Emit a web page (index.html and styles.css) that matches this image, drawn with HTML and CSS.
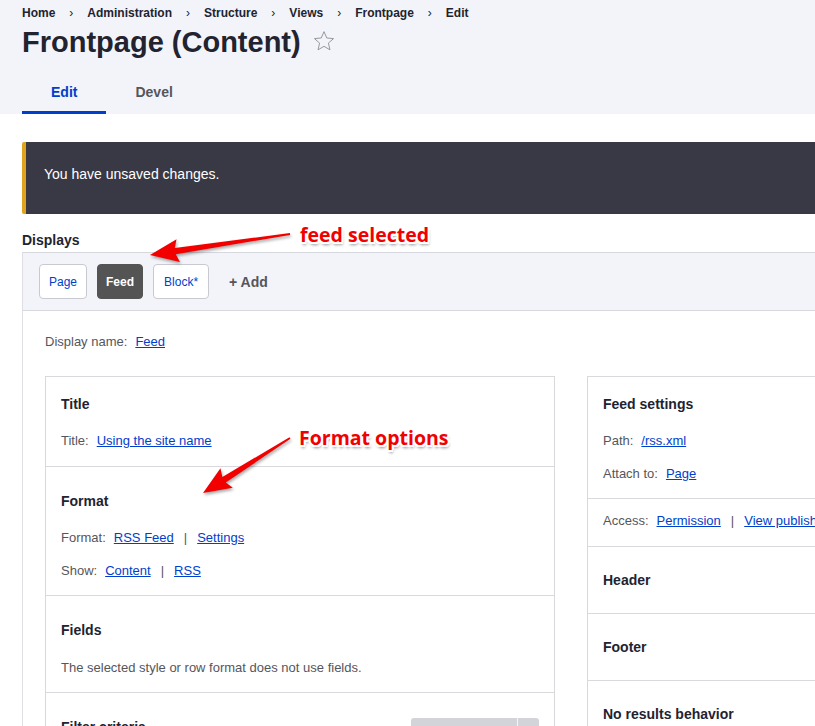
FILE: index.html
```html
<!DOCTYPE html>
<html lang="en">
<head>
<meta charset="utf-8">
<title>Frontpage (Content)</title>
<link rel="stylesheet" href="styles.css">
</head>
<body>
<div class="page">
  <header class="head">
    <nav class="crumbs">
      <a>Home</a><span class="csep">›</span><a>Administration</a><span class="csep">›</span><a>Structure</a><span class="csep">›</span><a>Views</a><span class="csep">›</span><a>Frontpage</a><span class="csep">›</span><a>Edit</a>
    </nav>
    <h1 class="title">Frontpage (Content)<svg class="star" width="22" height="22" viewBox="0 0 24 24"><path d="M12 1.8l3 6.9 7.4.7-5.6 4.9 1.7 7.3L12 17.8l-6.5 3.8 1.7-7.3-5.6-4.9 7.4-.7z" fill="none" stroke="#8e8e96" stroke-width="1" stroke-linejoin="miter"/></svg></h1>
    <div class="tabs">
      <a class="tab active">Edit</a>
      <a class="tab">Devel</a>
    </div>
  </header>

  <main class="main">
    <div class="msg">You have unsaved changes.</div>
    <div class="dlabel">Displays</div>
    <div class="displays">
      <div class="bar">
        <a class="dbtn">Page</a>
        <a class="dbtn sel">Feed</a>
        <a class="dbtn wide">Block*</a>
        <a class="addd">+ Add</a>
      </div>
      <div class="dbody">
        <div class="dname"><span class="lbl">Display name:</span><a class="lnk">Feed</a></div>
        <div class="cols">
          <div class="box">
            <section class="sec first firstl">
              <h3 class="sh">Title</h3>
              <div class="row"><span class="lbl">Title:</span><a class="lnk">Using the site name</a></div>
            </section>
            <section class="sec">
              <h3 class="sh">Format</h3>
              <div class="row"><span class="lbl">Format:</span><a class="lnk">RSS Feed</a><span class="sep">|</span><a class="lnk">Settings</a></div>
              <div class="row r2"><span class="lbl">Show:</span><a class="lnk">Content</a><span class="sep">|</span><a class="lnk">RSS</a></div>
            </section>
            <section class="sec">
              <h3 class="sh">Fields</h3>
              <div class="row plain">The selected style or row format does not use fields.</div>
            </section>
            <section class="sec filt">
              <h3 class="sh">Filter criteria</h3>
              <div class="split"><span class="smain">Add</span><span class="sdrop"></span></div>
            </section>
          </div>
          <div class="box">
            <section class="sec first">
              <h3 class="sh">Feed settings</h3>
              <div class="row"><span class="lbl">Path:</span><a class="lnk">/rss.xml</a></div>
              <div class="row r2"><span class="lbl">Attach to:</span><a class="lnk">Page</a></div>
            </section>
            <section class="sec access">
              <div class="row nomt"><span class="lbl">Access:</span><a class="lnk">Permission</a><span class="sep">|</span><a class="lnk">View published content</a></div>
            </section>
            <section class="sec honly">
              <h3 class="sh">Header</h3>
            </section>
            <section class="sec honly">
              <h3 class="sh">Footer</h3>
            </section>
            <section class="sec honly">
              <h3 class="sh">No results behavior</h3>
            </section>
          </div>
        </div>
      </div>
    </div>
  </main>

  <svg class="annot" width="815" height="726" viewBox="0 0 815 726">
    <g transform="translate(290 234) rotate(171.5)">
      <polygon class="arr" points="0,-0.9 116,-3.2 113,-11.5 141.6,0 113,11.5 116,3.2 0,0.9"/>
    </g>
    <g transform="translate(290 438) rotate(147.7)">
      <polygon class="arr" points="0,-0.9 78,-3.2 75,-11.5 102.9,0 75,11.5 78,3.2 0,0.9"/>
    </g>
  </svg>
  <div class="note n1">feed selected</div>
  <div class="note n2">Format options</div>
</div>
</body>
</html>
```

FILE: styles.css
```css
html, body {
  margin: 0;
  padding: 0;
  overflow: hidden;
  background: #fff;
}
body {
  font-family: "Liberation Sans", Arial, sans-serif;
  color: #222330;
}
.page {
  position: relative;
  width: 1200px;
  height: 726px;
  overflow: hidden;
}
a { text-decoration: none; }

/* header */
.head {
  background: #f3f4f9;
  padding: 4px 0 0 22px;
}
.crumbs {
  font-size: 12px;
  font-weight: 700;
  line-height: 18px;
  height: 18px;
  color: #222330;
}
.csep {
  display: inline-block;
  width: 32px;
  text-align: center;
  font-weight: 400;
}
.title {
  margin: 2px 0 0;
  font-size: 29px;
  line-height: 36px;
  font-weight: 700;
  color: #222330;
  display: flex;
  align-items: center;
}
.star {
  margin-left: 12px;
  margin-top: -2px;
}
.tabs {
  display: flex;
  margin-top: 6px;
}
.tab {
  font-size: 14px;
  font-weight: 700;
  line-height: 20px;
  padding: 16px 29px 9px;
  border-bottom: 3px solid transparent;
  color: #55565b;
}
.tab.active {
  color: #003ecc;
  border-bottom-color: #003ecc;
}

/* main */
.main {
  padding: 28px 0 0 22px;
}
.msg {
  background: #393945;
  border-left: 4px solid #e0a31f;
  border-radius: 2px;
  color: #fff;
  font-size: 14px;
  line-height: 20px;
  padding: 22px 18px 30px;
}
.dlabel {
  margin-top: 17px;
  font-size: 14px;
  font-weight: 700;
  line-height: 18px;
  margin-bottom: 3px;
}
.displays {
  border-left: 1px solid #dedee3;
}
.bar {
  background: #f3f4f9;
  border: 1px solid #d7d8de;
  border-left: 0;
  padding: 11px 16px;
  display: flex;
  align-items: center;
  gap: 10px;
}
.dbtn {
  height: 33px;
  line-height: 35px;
  padding: 0 9px;
  border: 1px solid #c9cad1;
  border-radius: 4px;
  background: #fff;
  color: #003ecc;
  font-size: 12px;
}
.dbtn.wide {
  padding: 0 10px;
}
.dbtn.sel {
  background: #545454;
  border-color: #545454;
  color: #fff;
  font-weight: 700;
  padding: 0 8px;
}
.addd {
  margin-left: 10px;
  font-size: 14px;
  font-weight: 700;
  color: #55565b;
}
.dbody {
  padding: 22px 0 0 22px;
}
.dname {
  font-size: 13px;
  line-height: 18px;
}
.lbl {
  color: #55565b;
  margin-right: 8px;
}
.lnk {
  color: #003ecc;
  text-decoration: underline;
}
.sep {
  color: #55565b;
  margin: 0 10px;
}
.cols {
  margin-top: 25px;
  display: grid;
  grid-template-columns: 510px 510px;
  gap: 32px;
}
.box {
  border: 1px solid #d8d8dd;
  border-bottom: 0;
}
.sec {
  padding: 24px 15px 14px;
  border-top: 1px solid #d8d8dd;
}
.sec.first {
  border-top: 0;
  padding-top: 17px;
}
.sec.firstl {
  padding-bottom: 15px;
}
.sh {
  margin: 0;
  font-size: 14px;
  line-height: 20px;
  font-weight: 700;
  color: #222330;
}
.row {
  font-size: 13px;
  line-height: 20px;
  margin-top: 17px;
  white-space: nowrap;
}
.row.r2 { margin-top: 13px; }
.row.plain { color: #55565b; margin-top: 18px; }
.row.nomt { margin-top: 0; }
.sec.access { padding-top: 12px; padding-bottom: 15px; }
.sec.honly { padding-top: 23px; padding-bottom: 23px; }
.sec.filt {
  display: flex;
  justify-content: space-between;
  align-items: flex-start;
  padding-top: 24px;
}
.split {
  display: flex;
  height: 34px;
  border-radius: 3px;
  overflow: hidden;
  margin-top: 1px;
}
.smain {
  background: #d3d4d9;
  width: 88px;
  font-size: 13px;
  font-weight: 700;
  line-height: 20px;
  padding: 4px 0 0 18px;
  color: #222330;
}
.sdrop {
  background: #d3d4d9;
  width: 21px;
  border-left: 1px solid #f3f4f9;
}

/* annotations */
.annot {
  position: absolute;
  left: 0;
  top: 0;
  pointer-events: none;
  filter: drop-shadow(1px 2px 1.5px rgba(0,0,0,0.35));
}
.arr {
  fill: #f20000;
}
.note {
  position: absolute;
  font-family: "Open Sans", "Noto Sans", sans-serif;
  font-weight: 700;
  font-size: 19.5px;
  line-height: 20px;
  color: #f20000;
  white-space: nowrap;
  text-shadow:
    -1.5px -1.5px 0 #fff, 1.5px -1.5px 0 #fff, -1.5px 1.5px 0 #fff, 1.5px 1.5px 0 #fff,
    0 -2px 0 #fff, 0 2px 0 #fff, -2px 0 0 #fff, 2px 0 0 #fff,
    1px 3px 3px rgba(0,0,0,0.45);
}
.n1 { left: 300px; top: 225px; }
.n2 { left: 299px; top: 428px; }
```
